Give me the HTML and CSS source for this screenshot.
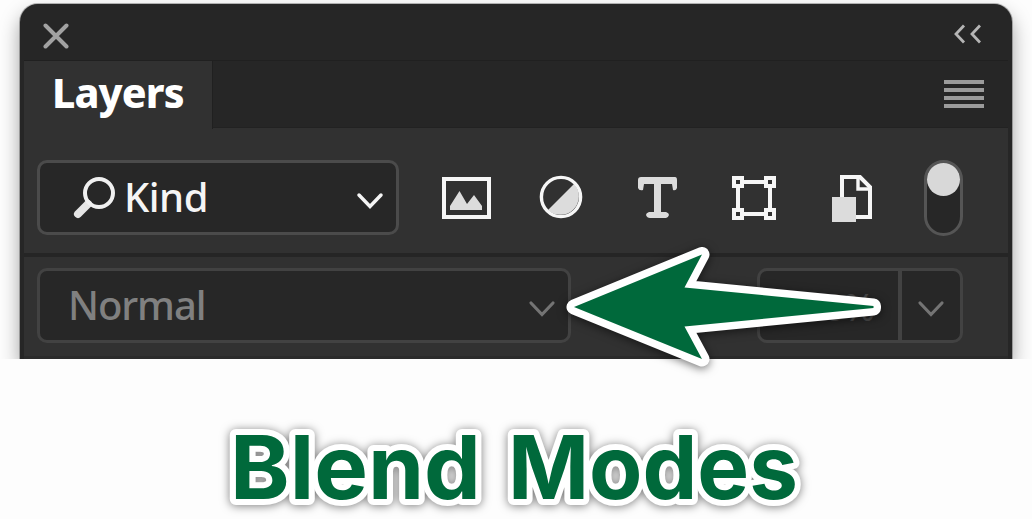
FILE: index.html
```
<!DOCTYPE html>
<html lang="en">
<head>
<meta charset="utf-8">
<title>Blend Modes</title>
<link rel="stylesheet" href="styles.css">
</head>
<body>
<div class="stage">
  <section class="panel">
    <header class="titlebar">
      <svg class="close" width="26" height="26" viewBox="0 0 26 26"><path d="M2.500 2.500 23.500 23.500M23.500 2.500 2.500 23.500"/></svg>
      <svg class="collapse" width="28" height="20" viewBox="0 0 28 20"><path d="M11 1.500 3 10 11 18.500M27 1.500 19 10 27 18.500"/></svg>
    </header>
    <nav class="tabs">
      <div class="tab"><span>Layers</span></div>
      <svg class="menu" width="40" height="28" viewBox="0 0 40 28"><path d="M0 2H40M0 10H40M0 18H40M0 26H40"/></svg>
    </nav>
    <div class="filters">
      <div class="select kind">
        <svg class="search" width="42" height="42" viewBox="0 0 42 42"><path class="handle" d="M15 27 5 37"/><circle cx="26" cy="16" r="14"/></svg>
        <span class="kind-label">Kind</span>
        <svg class="chevron" width="28" height="18" viewBox="0 0 28 18"><path d="M3 3 14 14.500 25 3"/></svg>
      </div>
      <div class="icons">
        <svg width="49" height="42" viewBox="0 0 49 42"><path class="line" d="M2 2H47V40H2Z"/><path class="solid" d="M8 33V29L17.500 14 25 27 32 18 40 29V33Z"/></svg>
        <svg width="44" height="44" viewBox="0 0 44 44"><path class="solid" d="M35 9A18.400 18.400 0 0 1 9 35Z"/><circle class="ring" cx="22" cy="22" r="19.600"/></svg>
        <svg width="40" height="42" viewBox="0 0 40 42"><path class="solid" d="M3 0H37Q39 0 39 3V11Q38 14 35 13L34 7H23V35H28Q31 36 31 38Q30 41 28 41H12Q9 41 8 38Q8 36 11 35H16V7H6L5 13Q1 14 0 11V3Q0 0 3 0Z"/></svg>
        <svg width="44" height="44" viewBox="0 0 44 44"><path class="line" d="M11 6H33M11 38H33M6 11V33M38 11V33"/><path class="line" d="M2 2H10V10H2ZM34 2H42V10H34ZM2 34H10V42H2ZM34 34H42V42H34Z"/></svg>
        <svg width="41" height="47" viewBox="0 0 41 47"><path class="line" d="M10 24V2H28L38 12V42H24"/><path class="ring" d="M26 2V14H38"/><path class="solid" d="M0 22H24V47H0Z"/></svg>
      </div>
      <div class="toggle"><i></i></div>
    </div>
    <div class="blend">
      <div class="select mode"><span class="mode-label">Normal</span>
        <svg class="chevron" width="28" height="18" viewBox="0 0 28 18"><path d="M3 3 14 14.500 25 3"/></svg>
      </div>
      <div class="select opacity"><span class="percent">100%</span>
        <div class="drop"><svg class="chevron" width="28" height="18" viewBox="0 0 28 18"><path d="M3 3 14 14.500 25 3"/></svg></div>
      </div>
    </div>
  </section>
  <svg class="caption" width="1032" height="160" viewBox="0 0 1032 160">
    <text x="230" y="139.500" textLength="251" lengthAdjust="spacingAndGlyphs">Blend</text>
    <text x="508" y="139.500" textLength="290" lengthAdjust="spacingAndGlyphs">Modes</text>
  </svg>
  <svg class="arrow" width="340" height="150" viewBox="555 235 340 150"><path d="M574 307 702 254.500 684.500 287.500 873.500 306V308L684.500 326.500 702 359Z"/></svg>
</div>
</body>
</html>
```
FILE: styles.css
```
* { box-sizing: border-box; }
body { margin: 0; background: #fdfdfd; font-family: "Noto Sans", sans-serif; overflow: hidden; }
svg { display: block; flex: none; fill: none; }
.stage { position: relative; width: 1032px; height: 519px; display: flex; flex-direction: column; }
.panel {
  width: 992px; height: 355px; margin: 4px 20px 0;
  border-radius: 18px 18px 0 0; border: solid #262626; border-width: 1px 4px 0;
  background: #313131; box-shadow: 0 10px 20px rgba(0,0,0,.38), 0 0 0 1px #bbb;
  clip-path: inset(-4px -20px 0 -20px);
}
.titlebar { height: 55px; display: flex; justify-content: space-between; padding: 18px 26px 0 19px; background: #262626; border-radius: 14px 14px 0 0; }
.close path { stroke: #a2a2a2; stroke-width: 4; stroke-linecap: round; }
.collapse { margin: 1px 1px 0 0; }
.collapse path { stroke: #b5b5b5; stroke-width: 2.8; }
.tabs { height: 68px; display: flex; justify-content: space-between; padding-right: 24px; background: #262626; border-top: 1px solid #202020; border-bottom: 1px solid #222; }
.tab { width: 189px; height: 68px; padding-left: 28px; background: #313131; border-right: 1px solid #202020; color: #fff; font-size: 41px; font-weight: 800; line-height: 63px; }
.tab span { display: block; width: max-content; letter-spacing: -.9px; }
.menu { margin-top: 19px; }
.menu path { stroke: #9b9b9b; stroke-width: 4; }
.filters { height: 129px; display: flex; padding: 32px 45px 0 13px; border-bottom: 4px solid #252525; }
.select { height: 75px; display: flex; align-items: center; background: #272727; border: 3px solid #4b4b4b; border-radius: 10px; }
.kind { width: 362px; padding: 0 12px 0 33px; color: #f5f5f5; }
.search { stroke: #f0f0f0; stroke-width: 4; }
.search .handle { stroke: #e5e5e5; stroke-width: 8; stroke-linecap: round; }
.kind-label { margin-left: 9px; font-size: 40px; font-weight: 500; line-height: 66px; letter-spacing: -.5px; margin-top: -2px; }
.chevron { margin-left: auto; margin-top: 6px; stroke: #f5f5f5; stroke-width: 3.5; stroke-linecap: round; }
.icons { width: 431px; margin-left: 43px; height: 75px; display: flex; align-items: center; }
.icons svg:nth-child(2) { margin-left: 48px; margin-top: -2px; }
.icons svg:nth-child(3) { margin-left: 55px; }
.icons svg:nth-child(4) { margin-left: 54px; }
.icons svg:nth-child(5) { margin-left: 56px; margin-top: 2px; }
.line { stroke: #f6f6f6; stroke-width: 4; }
.ring { stroke: #f6f6f6; stroke-width: 3.4; }
.solid { fill: #dcdcdc; }
.toggle { width: 39px; height: 76px; margin-left: auto; border: 3px solid #555; border-radius: 20px; background: #272727; }
.toggle i { display: block; width: 33px; height: 33px; border-radius: 50%; background: #d8d8d8; }
.blend { height: 102px; display: flex; justify-content: space-between; padding: 11px 45px 0 13px; border-bottom: 3px solid #2b2b2b; }
.blend .select { border-color: #424242; color: #808080; }
.mode { width: 534px; padding: 0 12px 0 28px; }
.mode-label { font-size: 40px; font-weight: 500; line-height: 66px; letter-spacing: -1.1px; margin-top: -2px; }
.blend .chevron { stroke: #747474; stroke-width: 3.2; }
.blend .opacity { width: 206px; color: #4a4a4a; }
.percent { width: 138px; padding-left: 25px; font-size: 38px; line-height: 66px; letter-spacing: -2.2px; }
.drop { width: 62px; height: 69px; display: flex; align-items: center; justify-content: center; border-left: 4px solid #424242; }
.drop .chevron { margin-left: 0; }
.caption { overflow: visible; filter: drop-shadow(0 1px 5px rgba(0,0,0,.5)); }
.caption text { font-family: Inter, sans-serif; font-size: 88px; font-weight: 700; fill: #00693b; stroke: #fff; stroke-width: 12; stroke-linejoin: round; paint-order: stroke; }
.arrow { position: absolute; left: 555px; top: 235px; overflow: visible; filter: drop-shadow(0 2px 5px rgba(0,0,0,.55)); }
.arrow path { fill: #00693b; stroke: #fff; stroke-width: 15; stroke-linejoin: round; paint-order: stroke; }
```
